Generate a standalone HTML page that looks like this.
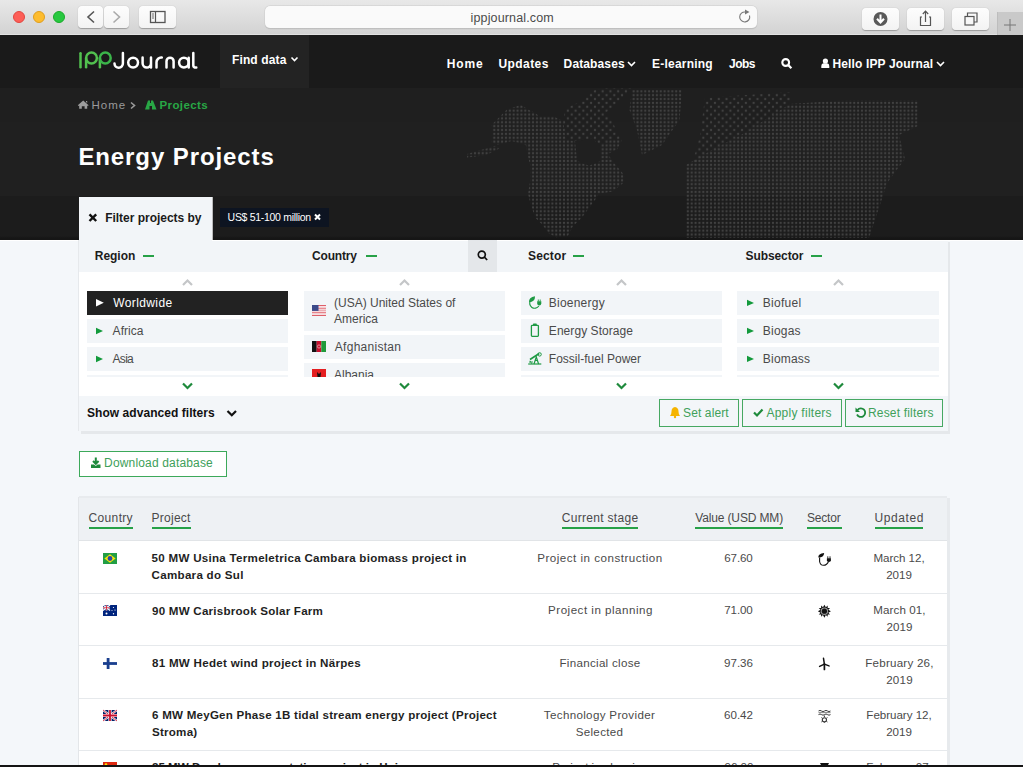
<!DOCTYPE html>
<html><head><meta charset="utf-8">
<style>
*{box-sizing:border-box;margin:0;padding:0}
html,body{width:1023px;height:767px;overflow:hidden;background:#f4f7fa;font-family:"Liberation Sans",sans-serif;position:relative}
.a{position:absolute}
.t{position:absolute;white-space:nowrap;line-height:1}
svg{position:absolute;overflow:visible}
/* chrome */
#chrome{left:0;top:0;width:1023px;height:35px;background:linear-gradient(#e8e8e8,#d3d3d3);border-bottom:1px solid #e2e2e2}
.tl{position:absolute;width:12px;height:12px;border-radius:50%;top:11px}
.cb{position:absolute;background:linear-gradient(#fdfdfd,#f3f3f3);border-radius:4px;box-shadow:0 0.5px 1px rgba(0,0,0,.28);}
#hdr{left:0;top:35px;width:1023px;height:53px;background:#1a1a1a}
#hero{left:0;top:88px;width:1023px;height:152px;background:linear-gradient(#1f1f1f 0,#1f1f1f 34px,#202020 34px,#202020 108px,#1c1c1c 108px,#1c1c1c 148px,#161616 150px);overflow:hidden}
.nav{font-weight:bold;font-size:12px;color:#fff}
.hd{font-size:12px;font-weight:bold;color:#1c1c1c}
.li{font-size:12px;color:#4a4a4a}
.btn{border:1px solid #46a862;background:transparent}
.bt{font-size:12px;color:#40a05a}
.th{font-size:12px;color:#4a4a4a}
.ul{top:527px;height:2px;background:#27a147}
.rb{left:79px;width:868px;height:1px;background:#e6e9ec}
.pn{font-size:11.6px;font-weight:bold;color:#1f1f1f;line-height:16.6px}
.td{font-size:11.6px;color:#4a4a4a;line-height:16.6px;text-align:center}
</style><style id="adj">
#url{letter-spacing:0.139px;margin-left:0.6px;margin-top:0.9px}
#nfind{letter-spacing:0.125px;margin-left:0.0px;margin-top:-0.4px}
#nhome{letter-spacing:0.8px;margin-left:-0.2px;margin-top:0.4px}
#nupd{letter-spacing:0.433px;margin-left:-0.6px;margin-top:0.0px}
#nel{letter-spacing:0.222px;margin-left:0.0px;margin-top:0.0px}
#njobs{letter-spacing:-0.534px;margin-left:1.0px;margin-top:0.0px}
#bhome{letter-spacing:1.0px;margin-left:-0.5px;margin-top:0px}
#bproj{letter-spacing:0.4px;margin-left:-0.5px;margin-top:0px}
#title{letter-spacing:0.9px;margin-left:-0.6px;margin-top:1.5px}
#ftab{letter-spacing:-0.024px;margin-left:0.2px;margin-top:0.0px}
#ftag{letter-spacing:-0.306px;margin-left:-0.4px;margin-top:0.0px}
#h_reg{letter-spacing:-0.04px;margin-left:-0.2px;margin-top:0.4px}
#h_cty{letter-spacing:-0.166px;margin-left:0.0px;margin-top:0.4px}
#h_sec{letter-spacing:0.16px;margin-left:-1.0px;margin-top:0.4px}
#h_sub{letter-spacing:-0.1px;margin-left:0.6px;margin-top:0.4px}
#l_ww{letter-spacing:0.399px;margin-left:1.2px;margin-top:-0.5px}
#l_af{letter-spacing:0.04px;margin-left:0.6px;margin-top:0.0px}
#l_as{letter-spacing:-0.733px;margin-left:0.6px;margin-top:0.0px}
#l_afg{letter-spacing:0.28px;margin-left:0.8px;margin-top:0.0px}
#l_bio{letter-spacing:0.224px;margin-left:-0.2px;margin-top:0.0px}
#l_es{letter-spacing:0.061px;margin-left:-0.2px;margin-top:0.0px}
#l_ff{letter-spacing:0.012px;margin-left:-0.2px;margin-top:0.0px}
#l_bf{letter-spacing:0.267px;margin-left:-0.2px;margin-top:0.0px}
#l_bg{letter-spacing:0.2px;margin-left:-0.2px;margin-top:0.0px}
#l_bm{letter-spacing:0.2px;margin-left:-0.2px;margin-top:0.0px}
#adv{letter-spacing:0.05px;margin-left:0.0px;margin-top:0.5px}
#b_alert{letter-spacing:0.125px;margin-left:0.0px;margin-top:0.0px}
#b_apply{letter-spacing:0.266px;margin-left:-0.6px;margin-top:0.0px}
#dl{letter-spacing:0.16px;margin-left:-0.4px;margin-top:0.2px}
#t_cty{letter-spacing:0.333px;margin-left:-0.4px;margin-top:0.2px}
#t_prj{letter-spacing:0.233px;margin-left:-0.4px;margin-top:0.0px}
#t_stg{letter-spacing:0.3px;margin-left:-0.2px;margin-top:0.0px}
#t_val{letter-spacing:-0.138px;margin-left:0.2px;margin-top:0.0px}
#t_sec{letter-spacing:-0.2px;margin-left:0.0px;margin-top:0.0px}
#t_upd{letter-spacing:0.567px;margin-left:-0.4px;margin-top:0.0px}
#r2p{letter-spacing:0.23px;margin-left:0.0px;margin-top:1.3px}
#r3p{letter-spacing:0.273px;margin-left:0.0px;margin-top:0.0px}
#nhello{letter-spacing:0.14px;margin-left:0.4px;margin-top:0px}
#ndb{letter-spacing:0.12px;margin-left:-0.4px;margin-top:0px}
#b_reset{letter-spacing:0.17px;margin-left:0px;margin-top:0px}
#r1p{letter-spacing:0.269px;margin-left:-0.4px;margin-top:0.0px}
#r4p{letter-spacing:0.229px;margin-left:0.0px;margin-top:0.0px}
#r1s{letter-spacing:0.499px;margin-left:0.0px;margin-top:0.0px}
#r2s{letter-spacing:0.5px;margin-left:0.5px;margin-top:0.0px}
#r3s{letter-spacing:0.286px;margin-left:0.0px;margin-top:0.0px}
#r4s{letter-spacing:0.327px;margin-left:-0.5px;margin-top:0.0px}
#r1v{letter-spacing:-0.125px;margin-left:-0.5px;margin-top:0.0px}
#r2v{letter-spacing:-0.125px;margin-left:-0.5px;margin-top:0.0px}
#r3v{letter-spacing:0.0px;margin-left:-0.5px;margin-top:0.0px}
#r4v{letter-spacing:0.0px;margin-left:-0.5px;margin-top:0.0px}
#r1d{letter-spacing:-0.042px;margin-left:0.0px;margin-top:0.0px}
#r2d{letter-spacing:0.083px;margin-left:0.5px;margin-top:0.0px}
#r3d{letter-spacing:0.234px;margin-left:0.5px;margin-top:0.0px}
#r4d{letter-spacing:-0.033px;margin-left:0.0px;margin-top:0.0px}
</style>
</head><body>

<!-- ============ BROWSER CHROME ============ -->
<div class="a" id="chrome"></div>
<div class="tl" style="left:13px;background:#fd5e57;border:0.5px solid #e14640"></div>
<div class="tl" style="left:33px;background:#fdbc2e;border:0.5px solid #df9e1e"></div>
<div class="tl" style="left:53px;background:#28c840;border:0.5px solid #1aab2a"></div>
<div class="cb" style="left:78px;top:6px;width:25px;height:22px"></div>
<div class="cb" style="left:104px;top:6px;width:25px;height:22px"></div>
<div class="cb" style="left:139px;top:6px;width:37px;height:22px"></div>
<svg style="left:0;top:0" width="1023" height="35">
  <polyline points="94,11.5 88,17 94,22.5" fill="none" stroke="#555" stroke-width="1.6"/>
  <polyline points="113.5,11.5 119.5,17 113.5,22.5" fill="none" stroke="#aaa" stroke-width="1.6"/>
  <rect x="150.5" y="11.5" width="14.5" height="11" fill="none" stroke="#555" stroke-width="1.3"/>
  <line x1="155.5" y1="11.5" x2="155.5" y2="22.5" stroke="#555" stroke-width="1.2"/>
  <line x1="152" y1="14" x2="154" y2="14" stroke="#555" stroke-width="0.9"/>
  <line x1="152" y1="16" x2="154" y2="16" stroke="#555" stroke-width="0.9"/>
  <line x1="152" y1="18" x2="154" y2="18" stroke="#555" stroke-width="0.9"/>
</svg>
<div class="a" style="left:265px;top:6px;width:492px;height:22px;background:#fafafa;border-radius:5px;box-shadow:0 0 0 0.5px #cfcfcf,0 0.5px 1px rgba(0,0,0,.2)"></div>
<div class="t" id="url" style="left:470px;top:11px;font-size:12.5px;color:#4b4b4b">ippjournal.com</div>
<svg style="left:0;top:0" width="1023" height="35">
  <path d="M749.5 15.5 A5 5 0 1 1 745.5 12" fill="none" stroke="#777" stroke-width="1.1"/>
  <path d="M745 9.5 L749.5 12 L745 14.5 Z" fill="#777"/>
</svg>
<div class="cb" style="left:862px;top:8px;width:37px;height:22px"></div>
<div class="cb" style="left:907px;top:8px;width:37px;height:22px"></div>
<div class="cb" style="left:952px;top:8px;width:37px;height:22px"></div>
<div class="a" style="left:997px;top:12px;width:26px;height:23px;background:#c9c9c9;border-left:1px solid #bdbdbd"></div>
<svg style="left:0;top:0" width="1023" height="35">
  <circle cx="880.5" cy="19" r="7" fill="#595959"/>
  <path d="M880.5 14.5 V22 M877 18.8 L880.5 22.5 L884 18.8" fill="none" stroke="#fff" stroke-width="2"/>
  <path d="M922 17 H920.5 V25.5 H930.5 V17 H929" fill="none" stroke="#555" stroke-width="1.2"/>
  <path d="M925.5 22 V11.5 M922.8 14 L925.5 11.2 L928.2 14" fill="none" stroke="#555" stroke-width="1.2"/>
  <rect x="965" y="16.5" width="9" height="8.5" fill="none" stroke="#555" stroke-width="1.2"/>
  <path d="M967.5 16.5 V13 H977 V22 H974" fill="none" stroke="#555" stroke-width="1.2"/>
  <path d="M1010 19 V31 M1004 25 H1016" stroke="#777" stroke-width="1"/>
</svg>

<!-- ============ HEADER ============ -->
<div class="a" id="hdr"></div>
<div class="a" style="left:220px;top:35px;width:89px;height:53px;background:#232323"></div>
<svg style="left:0;top:0" width="1023" height="90">
  <g fill="none" stroke="#52c14f" stroke-width="2.5" stroke-linecap="round">
    <path d="M80.5 53.3 V67.3"/>
    <path d="M86.1 67.3 V58"/>
    <circle cx="91.5" cy="58" r="5.4"/>
    <path d="M99.9 67.3 V58"/>
    <circle cx="105.3" cy="58" r="5.4" stroke="#3bb54a"/>
  </g>
  <g fill="none" stroke="#fff" stroke-width="2.5" stroke-linecap="round">
    <path d="M122.9 53 V63.3 A4.2 4.2 0 0 1 114.5 63.6"/>
    <circle cx="133.1" cy="62.6" r="4.9"/>
    <path d="M142.6 57.6 V63.3 A4.2 4.2 0 0 0 151 63.3 V57.6 M151 63 V67.5"/>
    <path d="M156.5 67.5 V62.3 A4.7 4.7 0 0 1 161.8 57.6"/>
    <path d="M166.5 67.5 V61.2 A3.55 3.55 0 0 1 173.6 61.2 V67.5"/>
    <circle cx="183.9" cy="62.6" r="4.8"/>
    <path d="M188.7 57.8 V67.5"/>
    <path d="M193.3 53 V65.5 Q193.3 67.6 196.3 67.6"/>
  </g>
</svg>
<div class="t nav" id="nfind" style="left:232px;top:54px">Find data</div>
<div class="t nav" id="nhome" style="left:447px;top:58px">Home</div>
<div class="t nav" id="nupd" style="left:499px;top:58px">Updates</div>
<div class="t nav" id="ndb" style="left:564px;top:58px">Databases</div>
<div class="t nav" id="nel" style="left:652px;top:58px">E-learning</div>
<div class="t nav" id="njobs" style="left:728px;top:58px">Jobs</div>
<div class="t nav" id="nhello" style="left:832px;top:58px">Hello IPP Journal</div>
<svg style="left:0;top:0" width="1023" height="90">
  <g fill="none" stroke="#fff" stroke-width="1.6">
    <polyline points="291.5,57.5 294.5,60.5 297.5,57.5"/>
    <polyline points="628,62 631.5,65.5 635,62"/>
    <polyline points="937,62 940.5,65.5 944,62"/>
    <circle cx="785.7" cy="62.5" r="3.4" stroke-width="2.1"/>
    <line x1="788.3" y1="65.1" x2="791.4" y2="68.2" stroke-width="2.2"/>
  </g>
  <circle cx="825.4" cy="61" r="2.6" fill="#fff"/>
  <path d="M821.3 68 V66 Q821.3 63.5 823.5 63.3 H827 Q829.3 63.5 829.3 66 V68 Z" fill="#fff"/>
</svg>

<!-- ============ HERO ============ -->
<div class="a" id="hero">
</div>
<svg style="left:0;top:88px" width="1023" height="152" viewBox="0 88 1023 152">
  <defs>
    <pattern id="dots" patternUnits="userSpaceOnUse" x="0.9" y="0.4" width="3.87" height="3.87"><rect x="0.8" y="0.8" width="2.3" height="2.3" rx="1.1" fill="#414141"/></pattern>
    <pattern id="dots2" patternUnits="userSpaceOnUse" x="0.9" y="0.4" width="7.74" height="7.74"><rect x="0.8" y="0.8" width="2.3" height="2.3" rx="1.1" fill="#414141"/><rect x="4.67" y="4.67" width="2.3" height="2.3" rx="1.1" fill="#414141"/></pattern>
  </defs>
  <g fill="url(#dots)">
    <polygon points="491.7,124.7 499.9,116.5 506.9,109.5 521.0,104.8 528.0,109.5 535.1,113.0 539.8,116.5 553.8,116.5 563.2,121.2 565.6,140.0 575.0,141.1 591.4,138.8 600.8,144.7 610.1,140.0 621.9,140.0 617.2,149.3 607.8,154.0 612.5,161.1 624.2,175.1 624.2,182.2 612.5,191.6 598.4,193.9 596.1,198.6 589.0,208.0 582.0,217.4 572.6,226.8 567.9,236.1 556.2,237.3 549.1,233.8 542.1,224.4 535.1,217.4 530.4,203.3 528.0,193.9 530.4,179.8 530.4,165.8 528.0,156.4 525.7,144.7 511.6,141.1 497.5,144.7 491.7,142.3 492.8,132.9"/>
    <polygon points="467.0,154.0 483.5,149.3 495.2,145.8 499.9,148.2 485.8,155.2 467.0,157.6"/>
    <polygon points="632,90 682,90 679.5,120 662,145 642,155 637,130 629.5,110"/>
    <polygon points="686,238 686,165 717,147 741,135 790,104 850,100 918,100 918,126 899,135 905,159 887,183 881,202 869,238"/>
  </g>
  <g fill="url(#dots2)">
    <polygon points="563.2,121.2 565.6,108.3 570.3,105.9 582.0,101.2 591.4,90.7 605.5,88.3 633.6,88.3 621.9,97.7 610.1,109.5 605.5,113.0 612.5,121.2 617.2,132.9 621.9,140.0 610.1,140.0 600.8,144.7 591.4,138.8 575.0,141.1 565.6,140.0"/>
    <polygon points="705,98 790,92 790,104 741,135 717,147 692,165 700,135"/>
  </g>
  <polygon points="575.0,141.1 591.4,138.8 600.8,144.7 600.8,161.1 589.0,165.8 577.3,161.1" fill="#202020"/>
</svg>
<svg style="left:0;top:0" width="1023" height="120">
  <path d="M77.8 105.3 L83.2 100.6 L88.6 105.3 L87.9 106 L87.2 105.4 V108.8 H84.6 V106.3 H81.8 V108.8 H79.2 V105.4 L78.5 106 Z M86 101 H87.2 V103 L86 102 Z" fill="#9c9c9c"/>
  <polyline points="131,102.5 134.5,105.5 131,108.5" fill="none" stroke="#9a9a9a" stroke-width="1.6"/>
  <path d="M145 109.5 L148 100.5 H150 V103 H151 V100.5 H153 L156.5 109.5 H152 V106 H149.5 V109.5 Z" fill="#28a745"/>
</svg>
<div class="t" id="bhome" style="left:92px;top:99.5px;font-size:11.5px;color:#9a9a9a">Home</div>
<div class="t" id="bproj" style="left:160px;top:99.5px;font-size:11.5px;color:#28a745;font-weight:bold">Projects</div>
<div class="t" id="title" style="left:79px;top:143px;font-size:24px;color:#fff;font-weight:bold">Energy Projects</div>

<!-- filter tab -->
<div class="a" style="left:79px;top:197px;width:133px;height:43px;background:#f2f5f8"></div>
<svg style="left:0;top:0" width="1023" height="240">
  <path d="M89.5 214.3 L96.2 221 M96.2 214.3 L89.5 221" stroke="#111" stroke-width="2.4"/>
</svg>
<div class="t" id="ftab" style="left:105px;top:212px;font-size:12px;color:#1a1a1a;font-weight:bold">Filter projects by</div>
<div class="a" style="left:220px;top:208px;width:109px;height:19px;background:#0d1421"></div>
<div class="t" id="ftag" style="left:228px;top:212px;font-size:10.5px;color:#fff">US$ 51-100 million</div>
<svg style="left:0;top:0" width="1023" height="240">
  <path d="M315 214.5 L320 219.5 M320 214.5 L315 219.5" stroke="#fff" stroke-width="2"/>
</svg>


<!-- ============ FILTER PANEL ============ -->
<div class="a" style="left:0;top:240px;width:79px;height:1px;background:#fff"></div>
<div class="a" style="left:81px;top:242px;width:869px;height:191.5px;background:#e5e8eb"></div>
<div class="a" style="left:79px;top:240px;width:869px;height:32px;background:#f2f5f8"></div>
<div class="a" style="left:212px;top:240px;width:811px;height:1px;background:#fff"></div>
<div class="a" style="left:211.5px;top:197px;width:1px;height:43px;background:rgba(255,255,255,.7)"></div>
<div class="a" style="left:79px;top:272px;width:869px;height:124px;background:#fff"></div>
<div class="a" style="left:79px;top:396px;width:869px;height:35px;background:#f3f6f9"></div>
<div class="a" style="left:78px;top:240px;width:1px;height:191px;background:#e6e9ec"></div>

<div class="a" style="left:468px;top:240px;width:29px;height:32px;background:#e4e7ea"></div>
<svg style="left:0;top:0" width="1023" height="432">
  <g fill="none" stroke="#111" stroke-width="1.7"><circle cx="481.8" cy="254.6" r="3.5"/><line x1="484.4" y1="257.2" x2="487.2" y2="260"/></g>
</svg>
<div class="t hd" id="h_reg" style="left:95px;top:250px">Region</div>
<div class="t hd" id="h_cty" style="left:312px;top:250px">Country</div>
<div class="t hd" id="h_sec" style="left:529px;top:250px">Sector</div>
<div class="t hd" id="h_sub" style="left:745px;top:250px">Subsector</div>
<div class="a" style="left:143px;top:255px;width:11px;height:2px;background:#27a147"></div>
<div class="a" style="left:366px;top:255px;width:11px;height:2px;background:#27a147"></div>
<div class="a" style="left:573px;top:255px;width:11px;height:2px;background:#27a147"></div>
<div class="a" style="left:811px;top:255px;width:11px;height:2px;background:#27a147"></div>
<svg style="left:0;top:0" width="1023" height="432">
  <g fill="none" stroke="#c4c6c8" stroke-width="2.2">
    <polyline points="183,285 187.5,280.5 192,285"/>
    <polyline points="400,285 404.5,280.5 409,285"/>
    <polyline points="617,285 621.5,280.5 626,285"/>
    <polyline points="834,285 838.5,280.5 843,285"/>
  </g>
  <g fill="none" stroke="#1e8a3c" stroke-width="2.2">
    <polyline points="183,383.5 187.5,388 192,383.5"/>
    <polyline points="400,383.5 404.5,388 409,383.5"/>
    <polyline points="617,383.5 621.5,388 626,383.5"/>
    <polyline points="834,383.5 838.5,388 843,383.5"/>
  </g>
</svg>
<!-- region list -->
<div class="a" style="left:87px;top:291px;width:201px;height:24px;background:#222"></div>
<div class="a" style="left:87px;top:319px;width:201px;height:24px;background:#f2f5f8"></div>
<div class="a" style="left:87px;top:347px;width:201px;height:24px;background:#f2f5f8"></div>
<div class="a" style="left:87px;top:375px;width:201px;height:2px;background:#f2f5f8"></div>
<svg style="left:0;top:0" width="1023" height="432">
  <path d="M96 299 L103.8 302.7 L96 306.5 Z" fill="#fff"/>
  <path d="M96 327.8 L103 331 L96 334.3 Z" fill="#139a3c"/>
  <path d="M96 355.8 L103 359 L96 362.3 Z" fill="#139a3c"/>
</svg>
<div class="t li" id="l_ww" style="left:112px;top:297px;color:#fff">Worldwide</div>
<div class="t li" id="l_af" style="left:112px;top:325px">Africa</div>
<div class="t li" id="l_as" style="left:112px;top:353px">Asia</div>
<!-- country list -->
<div class="a" style="left:304px;top:291px;width:201px;height:40px;background:#f2f5f8"></div>
<div class="a" style="left:304px;top:335px;width:201px;height:24px;background:#f2f5f8"></div>
<div class="a" style="left:304px;top:363px;width:201px;height:14px;background:#f2f5f8;overflow:hidden"></div>
<div class="t li" id="l_usa" style="left:334px;top:295px;line-height:16px;white-space:normal;width:160px">(USA) United States of America</div>
<div class="t li" id="l_afg" style="left:334px;top:341px">Afghanistan</div>
<div class="a" style="left:304px;top:363px;width:201px;height:14px;overflow:hidden">
  <div class="t li" id="l_alb" style="left:30px;top:6px">Albania</div>
  <svg style="left:8px;top:6px" width="14" height="11"><rect width="14" height="11" fill="#e41e20"/><path d="M5 3 L7 5 L9 3 L8.5 8 L7 10 L5.5 8 Z" fill="#111"/></svg>
</div>
<svg style="left:0;top:0" width="1023" height="432">
  <!-- USA flag -->
  <g transform="translate(312,305)">
    <rect width="14" height="11" fill="#fff"/>
    <rect y="0" width="14" height="0.85" fill="#d9434f"/><rect y="1.7" width="14" height="0.85" fill="#e8a0a8"/><rect y="3.4" width="14" height="0.85" fill="#d9434f"/><rect y="5.1" width="14" height="0.85" fill="#e8a0a8"/><rect y="6.8" width="14" height="0.85" fill="#d9434f"/><rect y="8.5" width="14" height="0.85" fill="#e8a0a8"/><rect y="10.15" width="14" height="0.85" fill="#d9434f"/>
    <rect width="6.5" height="5.9" fill="#3c4a8a"/>
  </g>
  <!-- Afghanistan flag -->
  <g transform="translate(312,341)">
    <rect width="4.7" height="11" fill="#111"/><rect x="4.7" width="4.6" height="11" fill="#c8102e"/><rect x="9.3" width="4.7" height="11" fill="#1f9a3a"/>
    <circle cx="7" cy="5.5" r="1.6" fill="none" stroke="#f3d0d0" stroke-width="0.6"/>
  </g>
</svg>
<!-- sector list -->
<div class="a" style="left:521px;top:291px;width:201px;height:24px;background:#f2f5f8"></div>
<div class="a" style="left:521px;top:319px;width:201px;height:24px;background:#f2f5f8"></div>
<div class="a" style="left:521px;top:347px;width:201px;height:24px;background:#f2f5f8"></div>
<div class="a" style="left:521px;top:375px;width:201px;height:2px;background:#f2f5f8"></div>
<div class="t li" id="l_bio" style="left:549px;top:297px">Bioenergy</div>
<div class="t li" id="l_es" style="left:549px;top:325px">Energy Storage</div>
<div class="t li" id="l_ff" style="left:549px;top:353px">Fossil-fuel Power</div>
<svg style="left:0;top:0" width="1023" height="432">
  <g fill="none" stroke="#1e9a44" stroke-width="1.2">
    <path d="M530.5 300.5 A4.6 4.6 0 0 0 538.8 306"/>
    <path d="M529 302.3 Q528.6 297.2 535 296.2 Q535.3 301.5 529 302.3 Z" fill="#1e9a44" stroke="none"/>
    <path d="M537.2 301.2 H541.3 V303.3 Q541.3 305.5 539.25 305.5 Q537.2 305.5 537.2 303.3 Z" fill="#1e9a44" stroke="none"/>
    <path d="M538.3 299.5 V301.5 M540.2 299.5 V301.5" stroke-width="0.9"/>
    <rect x="531.4" y="325.3" width="7" height="11" rx="0.8" stroke-width="1.3"/>
    <rect x="533" y="323.6" width="3.8" height="1.8" rx="0.6" fill="#1e9a44" stroke="none"/>
    <path d="M528.2 364 H541.3" stroke-width="1.2"/>
    <path d="M534 364 L536.3 357 L538.6 364 M535 360.5 H537.6" stroke-width="1.2"/>
    <path d="M530 359.5 L539.2 353.5" stroke-width="1.6"/>
    <circle cx="539.6" cy="354.4" r="1.7" stroke-width="1"/>
    <path d="M529 362 H533 M530 360.8 L531.8 363.8" stroke-width="0.9"/>
  </g>
</svg>
<!-- subsector list -->
<div class="a" style="left:737px;top:291px;width:202px;height:24px;background:#f2f5f8"></div>
<div class="a" style="left:737px;top:319px;width:202px;height:24px;background:#f2f5f8"></div>
<div class="a" style="left:737px;top:347px;width:202px;height:24px;background:#f2f5f8"></div>
<div class="a" style="left:737px;top:375px;width:202px;height:2px;background:#f2f5f8"></div>
<svg style="left:0;top:0" width="1023" height="432">
  <path d="M747 299.7 L754 302.9 L747 306.1 Z" fill="#139a3c"/>
  <path d="M747 327.7 L754 330.9 L747 334.1 Z" fill="#139a3c"/>
  <path d="M747 355.7 L754 358.9 L747 362.1 Z" fill="#139a3c"/>
</svg>
<div class="t li" id="l_bf" style="left:763px;top:297px">Biofuel</div>
<div class="t li" id="l_bg" style="left:763px;top:325px">Biogas</div>
<div class="t li" id="l_bm" style="left:763px;top:353px">Biomass</div>
<!-- footer -->
<div class="t" id="adv" style="left:87px;top:406px;font-size:12px;font-weight:bold;color:#111">Show advanced filters</div>
<svg style="left:0;top:0" width="1023" height="432">
  <polyline points="227.5,411 231.8,415.3 236,411" fill="none" stroke="#111" stroke-width="2.2"/>
</svg>
<div class="a btn" style="left:659px;top:399px;width:80px;height:28px"></div>
<div class="a btn" style="left:742px;top:399px;width:100px;height:28px"></div>
<div class="a btn" style="left:845px;top:399px;width:98px;height:28px"></div>
<div class="t bt" id="b_alert" style="left:683px;top:407px">Set alert</div>
<div class="t bt" id="b_apply" style="left:767px;top:407px">Apply filters</div>
<div class="t bt" id="b_reset" style="left:868px;top:407px">Reset filters</div>
<svg style="left:0;top:0" width="1023" height="432">
  <path d="M670 416 H680 Q678.5 414.5 678.5 411.5 Q678.5 407.5 675 407 Q671.5 407.5 671.5 411.5 Q671.5 414.5 670 416 Z" fill="#f5b400"/>
  <circle cx="675" cy="417" r="1.2" fill="#f5b400"/>
  <polyline points="754,412.5 757,415.5 762.5,409.5" fill="none" stroke="#1e8a3c" stroke-width="2.2"/>
  <path d="M857.5 410 A4.3 4.3 0 1 1 857 414.5" fill="none" stroke="#1e8a3c" stroke-width="1.8"/>
  <path d="M855.5 407.5 L855.5 412 L860 412 Z" fill="#1e8a3c"/>
</svg>

<!-- download -->
<div class="a" style="left:79px;top:451px;width:148px;height:26px;background:#fff;border:1px solid #3ca95a"></div>
<svg style="left:0;top:0" width="1023" height="480">
  <path d="M95.8 457.5 V463.5 M93 461 L95.8 463.8 L98.6 461" fill="none" stroke="#1e8a3c" stroke-width="2"/>
  <path d="M91 464.5 H94 L95.8 466 L97.6 464.5 H100.5 V468 H91 Z" fill="#1e8a3c"/>
</svg>
<div class="t" id="dl" style="left:104.5px;top:457px;font-size:12px;color:#40a05a">Download database</div>


<!-- ============ TABLE ============ -->
<div class="a" style="left:81px;top:498px;width:868.5px;height:270px;background:#e7eaed"></div>
<div class="a" style="left:79px;top:497px;width:868px;height:270px;background:#fff"></div>
<div class="a" style="left:79px;top:496px;width:868px;height:45px;background:#eef1f4;border-top:2px solid #e8ebee;border-bottom:1px solid #e1e4e7"></div>
<div class="a" style="left:78px;top:497px;width:1px;height:270px;background:#e3e6e9"></div>
<div class="t th" id="t_cty" style="left:89px;top:512px">Country</div>
<div class="t th" id="t_prj" style="left:152px;top:512px">Project</div>
<div class="t th" id="t_stg" style="left:562px;top:512px">Current stage</div>
<div class="t th" id="t_val" style="left:695px;top:512px">Value (USD MM)</div>
<div class="t th" id="t_sec" style="left:807px;top:512px">Sector</div>
<div class="t th" id="t_upd" style="left:875px;top:512px">Updated</div>
<div class="a ul" style="left:89px;width:44px"></div>
<div class="a ul" style="left:152px;width:39px"></div>
<div class="a ul" style="left:562px;width:76px"></div>
<div class="a ul" style="left:695px;width:88px"></div>
<div class="a ul" style="left:807px;width:35px"></div>
<div class="a ul" style="left:875px;width:48px"></div>
<div class="a rb" style="top:593px"></div>
<div class="a rb" style="top:645px"></div>
<div class="a rb" style="top:698px"></div>
<div class="a rb" style="top:750px"></div>
<!-- row1 -->
<div class="t pn" id="r1p" style="left:152px;top:550px">50 MW Usina Termeletrica Cambara biomass project in<br>Cambara do Sul</div>
<div class="t td c" id="r1s" style="left:500px;width:200px;top:550px">Project in construction</div>
<div class="t td c" id="r1v" style="left:689px;width:100px;top:550px">67.60</div>
<div class="t td c" id="r1d" style="left:849px;width:100px;top:550px">March 12,<br>2019</div>
<!-- row2 -->
<div class="t pn" id="r2p" style="left:152px;top:602px">90 MW Carisbrook Solar Farm</div>
<div class="t td c" id="r2s" style="left:500px;width:200px;top:602px">Project in planning</div>
<div class="t td c" id="r2v" style="left:689px;width:100px;top:602px">71.00</div>
<div class="t td c" id="r2d" style="left:849px;width:100px;top:602px">March 01,<br>2019</div>
<!-- row3 -->
<div class="t pn" id="r3p" style="left:152px;top:655px">81 MW Hedet wind project in N&auml;rpes</div>
<div class="t td c" id="r3s" style="left:500px;width:200px;top:655px">Financial close</div>
<div class="t td c" id="r3v" style="left:689px;width:100px;top:655px">97.36</div>
<div class="t td c" id="r3d" style="left:849px;width:100px;top:655px">February 26,<br>2019</div>
<!-- row4 -->
<div class="t pn" id="r4p" style="left:152px;top:707px">6 MW MeyGen Phase 1B tidal stream energy project (Project<br>Stroma)</div>
<div class="t td c" id="r4s" style="left:500px;width:200px;top:707px">Technology Provider<br>Selected</div>
<div class="t td c" id="r4v" style="left:689px;width:100px;top:707px">60.42</div>
<div class="t td c" id="r4d" style="left:849px;width:100px;top:707px">February 12,<br>2019</div>
<!-- row5 -->
<div class="t pn" id="r5p" style="left:152px;top:759px">25 MW Dandong power station project in Huian</div>
<div class="t td c" id="r5s" style="left:500px;width:200px;top:759px">Project in planning</div>
<div class="t td c" id="r5v" style="left:689px;width:100px;top:759px">96.00</div>
<div class="t td c" id="r5d" style="left:849px;width:100px;top:759px">February 07,</div>
<svg style="left:0;top:0" width="1023" height="767">
  <!-- Brazil -->
  <g transform="translate(103,553)"><rect width="14" height="11" fill="#229e45"/><path d="M7 1.3 L12.6 5.5 L7 9.7 L1.4 5.5 Z" fill="#f8e509"/><circle cx="7" cy="5.5" r="2.4" fill="#2b49a3"/></g>
  <!-- Australia -->
  <g transform="translate(103,605)"><rect width="14" height="11" fill="#00247d"/><path d="M0 0 L7 5.5 M7 0 L0 5.5" stroke="#fff" stroke-width="1.2"/><path d="M3.5 0 V5.5 M0 2.75 H7" stroke="#fff" stroke-width="1.6"/><path d="M3.5 0 V5.5 M0 2.75 H7" stroke="#cf142b" stroke-width="0.8"/><circle cx="3.5" cy="8.5" r="1" fill="#fff"/><circle cx="10.5" cy="2.5" r=".6" fill="#fff"/><circle cx="12" cy="5" r=".6" fill="#fff"/><circle cx="10.5" cy="8.8" r=".7" fill="#fff"/><circle cx="9" cy="5.5" r=".5" fill="#fff"/></g>
  <!-- Finland -->
  <g transform="translate(103,658)"><rect width="14" height="11" fill="#fff"/><rect x="3.7" width="2.8" height="11" fill="#1a3f8e"/><rect y="4.1" width="14" height="2.8" fill="#1a3f8e"/></g>
  <!-- UK -->
  <g transform="translate(103,710)"><rect width="14" height="11" fill="#012169"/><path d="M0 0 L14 11 M14 0 L0 11" stroke="#fff" stroke-width="2.2"/><path d="M0 0 L14 11 M14 0 L0 11" stroke="#c8102e" stroke-width="0.8"/><path d="M7 0 V11 M0 5.5 H14" stroke="#fff" stroke-width="3.2"/><path d="M7 0 V11 M0 5.5 H14" stroke="#c8102e" stroke-width="1.8"/></g>
  <!-- China -->
  <g transform="translate(103,762)"><rect width="14" height="11" fill="#de2910"/><circle cx="3" cy="2.5" r="1.3" fill="#ffde00"/></g>
  <!-- sector icons -->
  <g fill="none" stroke="#111" stroke-width="1.1">
    <path d="M819.6 557.5 V561.5 Q820.2 565.3 823.5 565.3 Q827 565.3 828.5 561.5"/>
    <path d="M818.3 557.6 Q818 553.5 824.2 553 Q823.8 557.7 818.3 557.6 Z" fill="#111" stroke="none"/>
    <path d="M826.9 558.3 H830.9 V560.2 Q830.9 562 828.9 562 Q826.9 562 826.9 560.2 Z" fill="#111" stroke="none"/>
    <path d="M827.8 556.3 V558.5 M830 556.3 V558.5" stroke-width="0.9"/>
  </g>
  <g transform="translate(824.4,611.2)">
    <path d="M0 -6.5 L1.45 -3.9 L3.25 -5.63 L3.3 -3.3 L5.63 -3.25 L3.9 -1.45 L6.5 0 L3.9 1.45 L5.63 3.25 L3.3 3.3 L3.25 5.63 L1.45 3.9 L0 6.5 L-1.45 3.9 L-3.25 5.63 L-3.3 3.3 L-5.63 3.25 L-3.9 1.45 L-6.5 0 L-3.9 -1.45 L-5.63 -3.25 L-3.3 -3.3 L-3.25 -5.63 L-1.45 -3.9 Z" fill="#111"/>
    <circle r="3.7" fill="#999"/>
    <circle r="2.6" fill="#111"/>
  </g>
  <g transform="translate(824.4,664.1)" fill="none" stroke="#111" stroke-linecap="round">
    <path d="M0 0 L-0.9 -5.8" stroke-width="1.5"/>
    <path d="M0 0 L-4.8 2.3" stroke-width="1.5"/>
    <path d="M0 0 L4.6 1.8" stroke-width="1.5"/>
    <path d="M0 0 V5.4" stroke-width="1.7"/>
  </g>
  <g fill="none" stroke="#222" stroke-width="0.9">
    <path d="M818.5 711 Q820 709.8 821.5 711 Q823 712.2 824.5 711 Q826 709.8 827.5 711 Q829 712.2 830.5 711"/>
    <path d="M818.5 712.6 H830.5" stroke-width="0.7" stroke="#555"/>
    <path d="M818.5 714.6 Q820 713.4 821.5 714.6 Q823 715.8 824.5 714.6 Q826 713.4 827.5 714.6 Q829 715.8 830.5 714.6"/>
    <path d="M824.4 715.5 V717"/>
    <circle cx="824.4" cy="719.8" r="2.1" stroke-width="1.1" stroke="#333"/>
    <path d="M821.3 717.5 L822.5 718.3 M827.5 717.5 L826.3 718.3 M821.3 722 L822.5 721.3 M827.5 722 L826.3 721.3 M824.4 722.2 V723" stroke-width="0.9" stroke="#444"/>
  </g>
  <path d="M820 763 H829 L827 767 H822 Z" fill="#111"/>
</svg>

<div class="a" style="left:0;top:765px;width:1023px;height:2px;background:#141414"></div>
</body></html>
